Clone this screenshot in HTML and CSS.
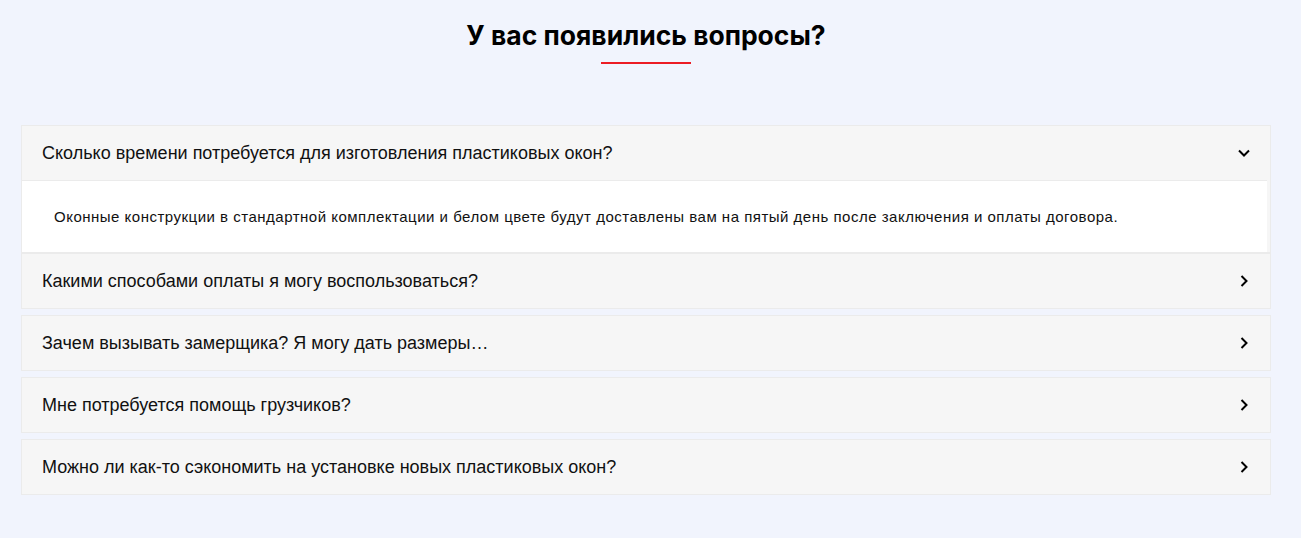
FILE: index.html
```html
<!DOCTYPE html>
<html lang="ru">
<head>
  <meta charset="UTF-8">
  <meta name="viewport" content="width=device-width, initial-scale=1.0">
  <title>Вопросы</title>
  <link rel="stylesheet" href="styles.css">
</head>
<body>
  <section class="faq">
    <h2 class="faq-title">У вас появились вопросы?</h2>
    <div class="faq-line"></div>

    <div class="faq-list">
      <div class="faq-item open">
        <div class="faq-head">
          <span>Сколько времени потребуется для изготовления пластиковых окон?</span>
          <svg class="chev" width="14" height="14" viewBox="0 0 14 14"><path d="M2 4.5 L7 9.5 L12 4.5" fill="none" stroke="#000" stroke-width="2"/></svg>
        </div>
        <div class="faq-body">Оконные конструкции в стандартной комплектации и белом цвете будут доставлены вам на пятый день после заключения и оплаты договора.</div>
      </div>
      <div class="faq-item">
        <div class="faq-head">
          <span>Какими способами оплаты я могу воспользоваться?</span>
          <svg class="chev" width="14" height="14" viewBox="0 0 14 14"><path d="M4.5 2 L9.5 7 L4.5 12" fill="none" stroke="#000" stroke-width="2"/></svg>
        </div>
      </div>
      <div class="faq-item">
        <div class="faq-head">
          <span>Зачем вызывать замерщика? Я могу дать размеры…</span>
          <svg class="chev" width="14" height="14" viewBox="0 0 14 14"><path d="M4.5 2 L9.5 7 L4.5 12" fill="none" stroke="#000" stroke-width="2"/></svg>
        </div>
      </div>
      <div class="faq-item">
        <div class="faq-head">
          <span>Мне потребуется помощь грузчиков?</span>
          <svg class="chev" width="14" height="14" viewBox="0 0 14 14"><path d="M4.5 2 L9.5 7 L4.5 12" fill="none" stroke="#000" stroke-width="2"/></svg>
        </div>
      </div>
      <div class="faq-item">
        <div class="faq-head">
          <span>Можно ли как-то сэкономить на установке новых пластиковых окон?</span>
          <svg class="chev" width="14" height="14" viewBox="0 0 14 14"><path d="M4.5 2 L9.5 7 L4.5 12" fill="none" stroke="#000" stroke-width="2"/></svg>
        </div>
      </div>
    </div>
  </section>
</body>
</html>
```

FILE: styles.css
```css
body {
  margin: 0;
  padding: 0;
  background: #f1f4fd;
  font-family: "Liberation Sans", Arial, sans-serif;
  color: #111;
}
.faq {
  padding: 17px 30px 42px 21px;
}
.faq-title {
  margin: 0;
  text-align: center;
  font-family: "Inter", sans-serif;
  font-size: 26.5px;
  font-weight: 700;
  line-height: 36px;
  color: #000;
}
.faq-line {
  width: 90px;
  height: 2px;
  margin: 9px auto 0;
  background: #ec1c24;
}
.faq-list {
  margin-top: 61px;
  display: flex;
  flex-direction: column;
  gap: 6px;
}
.faq-item {
  border: 1px solid #ebebeb;
  background: #f6f6f6;
}
.faq-item.open {
  margin-bottom: -6px;
}
.faq-head {
  display: flex;
  justify-content: space-between;
  align-items: center;
  height: 54px;
  padding: 0 19px 0 20px;
  font-size: 18px;
  line-height: 22px;
}
.faq-body {
  background: #fff;
  border-top: 1px solid #ebebeb;
  margin-right: 3px;
  padding: 0 32px;
  height: 71px;
  display: flex;
  align-items: center;
  font-size: 15px;
  letter-spacing: 0.5px;
  color: #111;
}
```
